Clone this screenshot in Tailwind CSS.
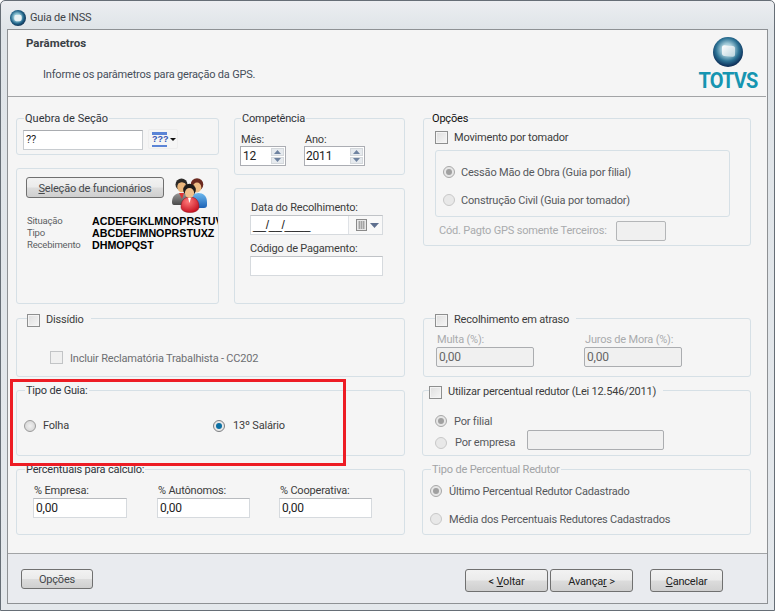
<!DOCTYPE html>
<html lang="pt">
<head>
<meta charset="utf-8">
<title>Guia de INSS</title>
<script src="https://cdn.jsdelivr.net/npm/@tailwindcss/browser@4"></script>
</head>
<body class="m-0 bg-white">
<div class="relative w-[775px] h-[611px] overflow-hidden flex flex-col bg-[linear-gradient(#eceef1_0,#dfe4e8_28px,#e4e8ec_100%)] border border-[#666e76] rounded-t-[5px] px-[6px] pb-[6px] font-['Roboto',sans-serif] text-[11px] leading-[14px] tracking-[-0.19px] text-[#3c3c3c]">
  <!-- title bar -->
  <div class="h-[28px] shrink-0 flex items-center gap-[4px] pl-[3px] pt-[5px] text-[#404448]">
    <svg width="16" height="16" viewBox="0 0 30 30"><defs><radialGradient id="ta" cx="45%" cy="45%" r="60%"><stop offset="0.35" stop-color="#8fc6d6"/><stop offset="0.7" stop-color="#1d5f85"/><stop offset="1" stop-color="#0d2546"/></radialGradient></defs><circle cx="15" cy="15" r="15" fill="url(#ta)"/><rect x="8" y="9" width="14" height="12" rx="4" fill="#e8f1f4"/></svg>
    <span>Guia de INSS</span>
  </div>
  <!-- client area -->
  <div class="flex-1 flex flex-col border border-[#8e9194] bg-[#f5f5f5]">
    <!-- header -->
    <div class="h-[67px] shrink-0 border-b border-[#a2a4a6] flex justify-between pr-[7px] mr-px">
      <div class="pl-[18px] pt-[6px]">
        <div class="font-bold text-[#3a3f45] text-[11.500px] tracking-normal">Parâmetros</div>
        <div class="pl-[17px] pt-[18px] text-[#464e5a]">Informe os parâmetros para geração da GPS.</div>
      </div>
      <div class="flex flex-col items-center pt-[7px] w-[62px]">
        <svg width="30" height="30" viewBox="0 0 30 30"><defs><radialGradient id="lg" cx="48%" cy="42%" r="62%"><stop offset="0.3" stop-color="#a8cfdc"/><stop offset="0.62" stop-color="#2c7294"/><stop offset="0.85" stop-color="#123a63"/><stop offset="1" stop-color="#0c2145"/></radialGradient><linearGradient id="lc" x1="0" y1="0" x2="1" y2="1"><stop offset="0" stop-color="#ffffff"/><stop offset="1" stop-color="#b9d3dd"/></linearGradient></defs><circle cx="15" cy="15" r="15" fill="url(#lg)"/><path d="M9 10.5c0-1.5 1-2.200 2.500-2.200l8 .8c1.700.2 2.500 1 2.500 2.500v6c0 1.500-1 2.300-2.500 2.200l-8-.8c-1.500-.2-2.500-1-2.500-2.500z" fill="url(#lc)"/></svg>
        <div class="font-bold text-[20px] leading-[18px] tracking-[-0.8px] scale-y-110 text-[#1695b1] mt-[4px]">TOTVS</div>
      </div>
    </div>

    <!-- main -->
    <div class="flex-1 flex gap-[17px] pl-[8px] pt-[21px]">
      <!-- left column -->
      <div class="w-[389px] flex flex-col gap-[13px]">
        <div class="h-[186px] flex gap-[15px] mb-px">
          <div class="w-[203px] flex flex-col gap-[13px]">
            <!-- Quebra de Secao -->
            <div class="relative h-[37px] border border-[#d6e0e6] rounded-[3px] pl-[6px] pt-[11px] flex gap-[5px] items-start">
              <span class="absolute -top-[7px] left-[7px] px-px bg-[#f5f5f5] text-[#30343a] tracking-normal">Quebra de Seção</span>
              <div class="w-[120px] h-[20px] bg-white border border-[#c8ccd0] border-t-[#a9acb0] pl-[2px] leading-[18px] text-[#222]">??</div>
              <div class="w-[30px] h-[20px] -mt-px border border-[#eeeeee] rounded-[2px] flex items-center pl-[3px] gap-[2px]">
                <div class="w-[15px] h-[15px] flex flex-col justify-between">
                  <div class="h-[3px] bg-[#5b84d6]"></div>
                  <div class="font-['Liberation_Sans',sans-serif] font-bold text-[9px] leading-[9px] tracking-normal text-[#3454b4] -my-px">???</div>
                  <div class="h-[2px] bg-[#5b84d6]"></div>
                </div>
                <svg width="6" height="3" viewBox="0 0 6 3" class="ml-[1px]"><path d="M0 0h6L3 3z" fill="#111"/></svg>
              </div>
            </div>
            <!-- Selecao -->
            <div class="h-[136px] border border-[#d6e0e6] rounded-[3px] pl-[9px] pt-[8px] overflow-hidden">
              <div class="flex gap-[8px] h-[36px]">
                <div class="w-[138px] h-[21px] border border-[#707070] rounded-[3px] bg-[linear-gradient(#f2f2f2_0%,#ebebeb_48%,#dcdcdc_52%,#cfcfcf_100%)] flex items-center justify-center text-[#44484c]"><span class="pt-[2px]"><span class="underline">S</span>eleção de funcionários</span></div>
                <svg width="36" height="36" viewBox="0 0 36 36" class="shrink-0">
                  <defs><radialGradient id="pr" cx="40%" cy="30%" r="75%"><stop offset="0" stop-color="#ff7a7a"/><stop offset="1" stop-color="#c40e1e"/></radialGradient><linearGradient id="pb" x1="0" y1="0" x2="0" y2="1"><stop offset="0" stop-color="#6db9ef"/><stop offset="1" stop-color="#1d62b5"/></linearGradient><linearGradient id="pg" x1="0" y1="0" x2="0" y2="1"><stop offset="0" stop-color="#9a9a9a"/><stop offset="1" stop-color="#4a4a4a"/></linearGradient></defs>
                  <path d="M0 25c0-6 4-9 9-9s9 3 9 9v3H2c-1.500 0-2-1-2-3z" fill="url(#pg)"/>
                  <path d="M7 16l3 6 2-6z" fill="#d33"/>
                  <circle cx="9.500" cy="7.500" r="6" fill="#33302e"/>
                  <ellipse cx="9.800" cy="10" rx="4.500" ry="5.200" fill="#eab67c"/>
                  <path d="M5 8c1-3 7-4 9.500-.5L14.500 5C12 1 6 2 4.500 6z" fill="#2b2826"/>
                  <path d="M19 25c0-6 3-9 7.500-9s8.500 3 8.500 9v3c0 2-1 3-3 3H21z" fill="url(#pb)"/>
                  <circle cx="25" cy="7.500" r="6.300" fill="#6b2a20"/>
                  <ellipse cx="25" cy="10.500" rx="4.300" ry="5" fill="#efbd85"/>
                  <path d="M9 30c0-6 3-10 9-10s9 4 9 10c0 3.500-4 5.500-9 5.500S9 33.500 9 30z" fill="url(#pr)" stroke="#8f1018" stroke-width=".5"/>
                  <circle cx="17.500" cy="13" r="6.300" fill="#1e1b1a"/>
                  <ellipse cx="17.500" cy="16" rx="4.600" ry="5" fill="#f0c08c"/>
                  <path d="M16 21l1.500 5 1.500-5z" fill="#fff"/>
                </svg>
              </div>
              <div class="mt-[2px] flex leading-[12px]">
                <div class="w-[66px] shrink-0 pl-px text-[9.500px] text-[#5c5f63]"><div>Situação</div><div>Tipo</div><div>Recebimento</div></div>
                <div class="font-['Liberation_Sans',sans-serif] font-bold text-[#000] text-[10.700px] tracking-normal whitespace-nowrap"><div>ACDEFGIKLMNOPRSTUV</div><div>ABCDEFIMNOPRSTUXZ</div><div>DHMOPQST</div></div>
              </div>
            </div>
          </div>
          <div class="w-[171px] flex flex-col gap-[13px]">
            <!-- Competencia -->
            <div class="relative h-[57px] border border-[#d6e0e6] rounded-[3px] pl-[5px] pt-[14px] flex gap-[18px]">
              <span class="absolute -top-[7px] left-[6px] px-px bg-[#f5f5f5] text-[#30343a]">Competência</span>
              <div class="w-[46px]">
                <div class="leading-[13px] pl-px">Mês:</div>
                <div class="h-[20px] bg-white border border-[#abadb3] flex justify-between leading-[18px] pl-[2px] text-[12px] text-[#222]">12
                  <div class="w-[15px] flex flex-col gap-px p-px"><div class="flex-1 bg-[#e6eaee] border border-[#d4d8dc] flex items-center justify-center"><svg width="7" height="4" viewBox="0 0 7 4"><path d="M0 4h7L3.500 0z" fill="#6f83a0"/></svg></div><div class="flex-1 bg-[#e6eaee] border border-[#d4d8dc] flex items-center justify-center"><svg width="7" height="4" viewBox="0 0 7 4"><path d="M0 0h7L3.500 4z" fill="#6f83a0"/></svg></div></div>
                </div>
              </div>
              <div class="w-[61px]">
                <div class="leading-[13px] pl-px">Ano:</div>
                <div class="h-[20px] bg-white border border-[#abadb3] flex justify-between leading-[18px] pl-[1px] text-[12px] text-[#222]">2011
                  <div class="w-[15px] flex flex-col gap-px p-px"><div class="flex-1 bg-[#e6eaee] border border-[#d4d8dc] flex items-center justify-center"><svg width="7" height="4" viewBox="0 0 7 4"><path d="M0 4h7L3.500 0z" fill="#6f83a0"/></svg></div><div class="flex-1 bg-[#e6eaee] border border-[#d4d8dc] flex items-center justify-center"><svg width="7" height="4" viewBox="0 0 7 4"><path d="M0 0h7L3.500 4z" fill="#6f83a0"/></svg></div></div>
                </div>
              </div>
            </div>
            <!-- Data -->
            <div class="h-[116px] border border-[#d6e0e6] rounded-[3px] pl-[15px] pt-[12px]">
              <div class="leading-[13px] pl-px">Data do Recolhimento:</div>
              <div class="w-[133px] h-[20px] mt-px bg-white border border-[#d6dade] border-t-[#c0c3c7] flex">
                <div class="w-[98px] border-r border-[#dfe2e6] leading-[18px] pl-[2px] font-['Liberation_Sans',sans-serif] text-[12px] text-[#222] tracking-[-0.3px]">__/__/____</div>
                <div class="flex-1 bg-[#f8f8f8] flex items-center pl-[7px] gap-[2px]">
                  <svg width="12" height="13" viewBox="0 0 12 13"><rect x=".5" y=".5" width="10" height="11" fill="#e8e8e8" stroke="#8a8a8a"/><path d="M2 3h7M2 5h7M2 7h7M2 9h7M3.500 2v8M5.500 2v8M7.500 2v8" stroke="#9a9a9a" stroke-width=".8"/></svg>
                  <svg width="9" height="5" viewBox="0 0 9 5"><path d="M0 0h9L4.500 5z" fill="#5e6f8e"/></svg>
                </div>
              </div>
              <div class="leading-[14px] mt-[7px]">Código de Pagamento:</div>
              <div class="w-[133px] h-[20px] bg-white border border-[#d6dade] border-t-[#c0c3c7]"></div>
            </div>
          </div>
        </div>
        <!-- Dissidio -->
        <div class="relative h-[59px] border border-[#d6e0e6] rounded-[3px] pl-[33px] pt-[32px] flex items-start gap-[7px]">
          <div class="absolute -top-[6px] left-[10px] pr-[7px] bg-[#f5f5f5] flex items-center gap-[6px]"><span class="w-[13px] h-[13px] border border-[#8e8f8f] bg-[linear-gradient(135deg,#dedede,#f6f6f6)] shadow-[inset_0_0_0_1px_#f4f4f4]"></span><span>Dissídio</span></div>
          <span class="w-[13px] h-[13px] border border-[#c2c4c6] bg-[#f0f0f0]"></span><span class="pt-px text-[#6d6f72]">Incluir Reclamatória Trabalhista - CC202</span>
        </div>
        <!-- Tipo de Guia -->
        <div class="relative h-[66px] border border-[#d6e0e6] rounded-[3px] pl-[7px] pt-[28px] flex items-start">
          <span class="absolute -top-[7px] left-[8px] px-px bg-[#f5f5f5] text-[#30343a]">Tipo de Guia:</span>
          <div class="w-[189px] flex items-center gap-[7px]"><span class="w-[12px] h-[12px] rounded-full border border-[#9a9a9a] bg-[radial-gradient(#f0f0f0,#d0d0d0)]"></span><span>Folha</span></div>
          <div class="flex items-center gap-[8px]"><span class="w-[12px] h-[12px] rounded-full border border-[#7d7f82] bg-[#e8e8e8] flex items-center justify-center"><span class="w-[6px] h-[6px] rounded-full bg-[#0b6fa3]"></span></span><span>13º Salário</span></div>
        </div>
        <!-- Percentuais -->
        <div class="relative h-[66px] border border-[#d6e0e6] rounded-[3px] pl-[16px] pt-[14px] flex">
          <span class="absolute -top-[7px] left-[8px] px-px bg-[#f5f5f5] text-[#30343a]">Percentuais para cálculo:</span>
          <div class="w-[124px]"><div class="pl-px">% Empresa:</div><div class="w-[94px] h-[20px] bg-white border border-[#d6dade] border-t-[#b8bbbf] pl-[2px] leading-[18px] text-[12px] text-[#222]">0,00</div></div>
          <div class="w-[122px]"><div class="pl-px">% Autônomos:</div><div class="w-[93px] h-[20px] bg-white border border-[#d6dade] border-t-[#b8bbbf] pl-[2px] leading-[18px] text-[12px] text-[#222]">0,00</div></div>
          <div><div class="pl-px">% Cooperativa:</div><div class="w-[93px] h-[20px] bg-white border border-[#d6dade] border-t-[#b8bbbf] pl-[2px] leading-[18px] text-[12px] text-[#222]">0,00</div></div>
        </div>
      </div>

      <!-- right column -->
      <div class="w-[329px] flex flex-col">
        <!-- Opcoes -->
        <div class="relative h-[128px] ml-px border border-[#d6e0e6] rounded-[3px] pl-[11px] pt-[11px]">
          <span class="absolute -top-[7px] left-[7px] px-px bg-[#f5f5f5] text-[#111]">Opções</span>
          <div class="flex items-center gap-[6px] h-[14px]"><span class="w-[13px] h-[13px] border border-[#8e8f8f] bg-[linear-gradient(135deg,#dedede,#f6f6f6)] shadow-[inset_0_0_0_1px_#f4f4f4]"></span><span class="pt-[2px]">Movimento por tomador</span></div>
          <div class="w-[295px] h-[67px] mt-[6px] border border-[#d6e0e6] rounded-[3px] pl-[7px] pt-[14px] flex flex-col gap-[14px]">
            <div class="flex items-center gap-[6px] h-[14px]"><span class="w-[12px] h-[12px] rounded-full border border-[#a8a8a8] bg-[#e6e6e6] flex items-center justify-center"><span class="w-[6px] h-[6px] rounded-full bg-[#a0a0a0]"></span></span><span class="pt-[2px] text-[#55585c]">Cessão Mão de Obra (Guia por filial)</span></div>
            <div class="flex items-center gap-[6px] h-[14px]"><span class="w-[12px] h-[12px] rounded-full border border-[#c8c8c8] bg-[#e8e8e8]"></span><span class="pt-[2px] text-[#55585c]">Construção Civil (Guia por tomador)</span></div>
          </div>
          <div class="flex items-center h-[20px] mt-[4px] pl-[4px]">
            <span class="w-[177px] text-[#a9abad]">Cód. Pagto GPS somente Terceiros:</span>
            <span class="w-[50px] h-[20px] border border-[#b4b6b8] rounded-[2px] bg-[#f0f0f0]"></span>
          </div>
        </div>
        <!-- Recolhimento -->
        <div class="relative h-[59px] mt-[72px] ml-px border border-[#d6e0e6] rounded-[3px] pl-[12px] pt-[14px] flex">
          <div class="absolute -top-[6px] left-[11px] pr-[7px] bg-[#f5f5f5] flex items-center gap-[6px]"><span class="w-[13px] h-[13px] border border-[#8e8f8f] bg-[linear-gradient(135deg,#dedede,#f6f6f6)] shadow-[inset_0_0_0_1px_#f4f4f4]"></span><span>Recolhimento em atraso</span></div>
          <div class="w-[148px]"><div class="pl-px text-[#a9abad]">Multa (%):</div><div class="w-[98px] h-[20px] border border-[#abadb0] rounded-[2px] bg-[#f0f0f0] pl-[2px] leading-[18px] text-[12px] text-[#666]">0,00</div></div>
          <div><div class="pl-px text-[#a9abad]">Juros de Mora (%):</div><div class="w-[98px] h-[20px] border border-[#abadb0] rounded-[2px] bg-[#f0f0f0] pl-[2px] leading-[18px] text-[12px] text-[#666]">0,00</div></div>
        </div>
        <!-- Utilizar -->
        <div class="relative h-[66px] mt-[13px] border border-[#d6e0e6] rounded-[3px] pl-[12px] pt-[23px]">
          <div class="absolute -top-[6px] left-[6px] pr-[7px] bg-[#f5f5f5] flex items-center gap-[6px]"><span class="w-[13px] h-[13px] border border-[#8e8f8f] bg-[linear-gradient(135deg,#dedede,#f6f6f6)] shadow-[inset_0_0_0_1px_#f4f4f4]"></span><span>Utilizar percentual redutor (Lei 12.546/2011)</span></div>
          <div class="flex items-center gap-[7px] h-[14px]"><span class="w-[12px] h-[12px] rounded-full border border-[#a8a8a8] bg-[#e6e6e6] flex items-center justify-center"><span class="w-[6px] h-[6px] rounded-full bg-[#a0a0a0]"></span></span><span class="pt-[2px] text-[#55585c]">Por filial</span></div>
          <div class="flex items-start h-[20px] mt-[2px]"><span class="w-[12px] h-[12px] mt-[7px] rounded-full border border-[#c8c8c8] bg-[#e8e8e8]"></span><span class="w-[80px] pl-[8px] mt-[6px] text-[#55585c]">Por empresa</span><span class="w-[137px] h-[20px] border border-[#abadb0] rounded-[2px] bg-[#f0f0f0]"></span></div>
        </div>
        <!-- Tipo de percentual -->
        <div class="relative h-[66px] mt-[13px] border border-[#d6e0e6] rounded-[3px] pl-[7px] pt-[14px] flex flex-col gap-[14px]">
          <span class="absolute -top-[7px] left-[8px] px-px bg-[#f5f5f5] text-[#a2a4a6]">Tipo de Percentual Redutor</span>
          <div class="flex items-center gap-[7px] h-[14px]"><span class="w-[12px] h-[12px] rounded-full border border-[#a8a8a8] bg-[#e6e6e6] flex items-center justify-center"><span class="w-[6px] h-[6px] rounded-full bg-[#a0a0a0]"></span></span><span class="pt-[2px] text-[#55585c]">Último Percentual Redutor Cadastrado</span></div>
          <div class="flex items-center gap-[7px] h-[14px]"><span class="w-[12px] h-[12px] rounded-full border border-[#c8c8c8] bg-[#e8e8e8]"></span><span class="pt-[2px] text-[#55585c]">Média dos Percentuais Redutores Cadastrados</span></div>
        </div>
      </div>
    </div>

    <!-- footer -->
    <div class="h-[50px] shrink-0 bg-[#e9ebef] border-t border-[#a2a4a6] flex items-start pt-[15px] pl-[13px] pr-[44px]">
      <div class="w-[72px] h-[20px] border border-[#707070] rounded-[3px] bg-[linear-gradient(#f2f2f2_0%,#ebebeb_48%,#dcdcdc_52%,#cfcfcf_100%)] flex items-center justify-center text-[#44484c]"><span class="pt-[2px]">Opções</span></div>
      <div class="ml-auto w-[83px] h-[23px] border border-[#707070] rounded-[3px] bg-[linear-gradient(#f2f2f2_0%,#ebebeb_48%,#dcdcdc_52%,#cfcfcf_100%)] flex items-center justify-center text-[#222]"><span class="pt-[2px]">&lt; <span class="underline">V</span>oltar</span></div>
      <div class="ml-[2px] w-[83px] h-[23px] border border-[#707070] rounded-[3px] bg-[linear-gradient(#f2f2f2_0%,#ebebeb_48%,#dcdcdc_52%,#cfcfcf_100%)] flex items-center justify-center text-[#222]"><span class="pt-[2px]">Avança<span class="underline">r</span> &gt;</span></div>
      <div class="ml-[17px] w-[73px] h-[23px] border border-[#707070] rounded-[3px] bg-[linear-gradient(#f2f2f2_0%,#ebebeb_48%,#dcdcdc_52%,#cfcfcf_100%)] flex items-center justify-center text-[#222]"><span class="pt-[2px]"><span class="underline">C</span>ancelar</span></div>
    </div>
  </div>
  <!-- red annotation -->
  <div class="absolute left-[9px] top-[378px] w-[336px] h-[87px] border-[3px] border-[#ed1c24]"></div>
</div>
</body>
</html>
